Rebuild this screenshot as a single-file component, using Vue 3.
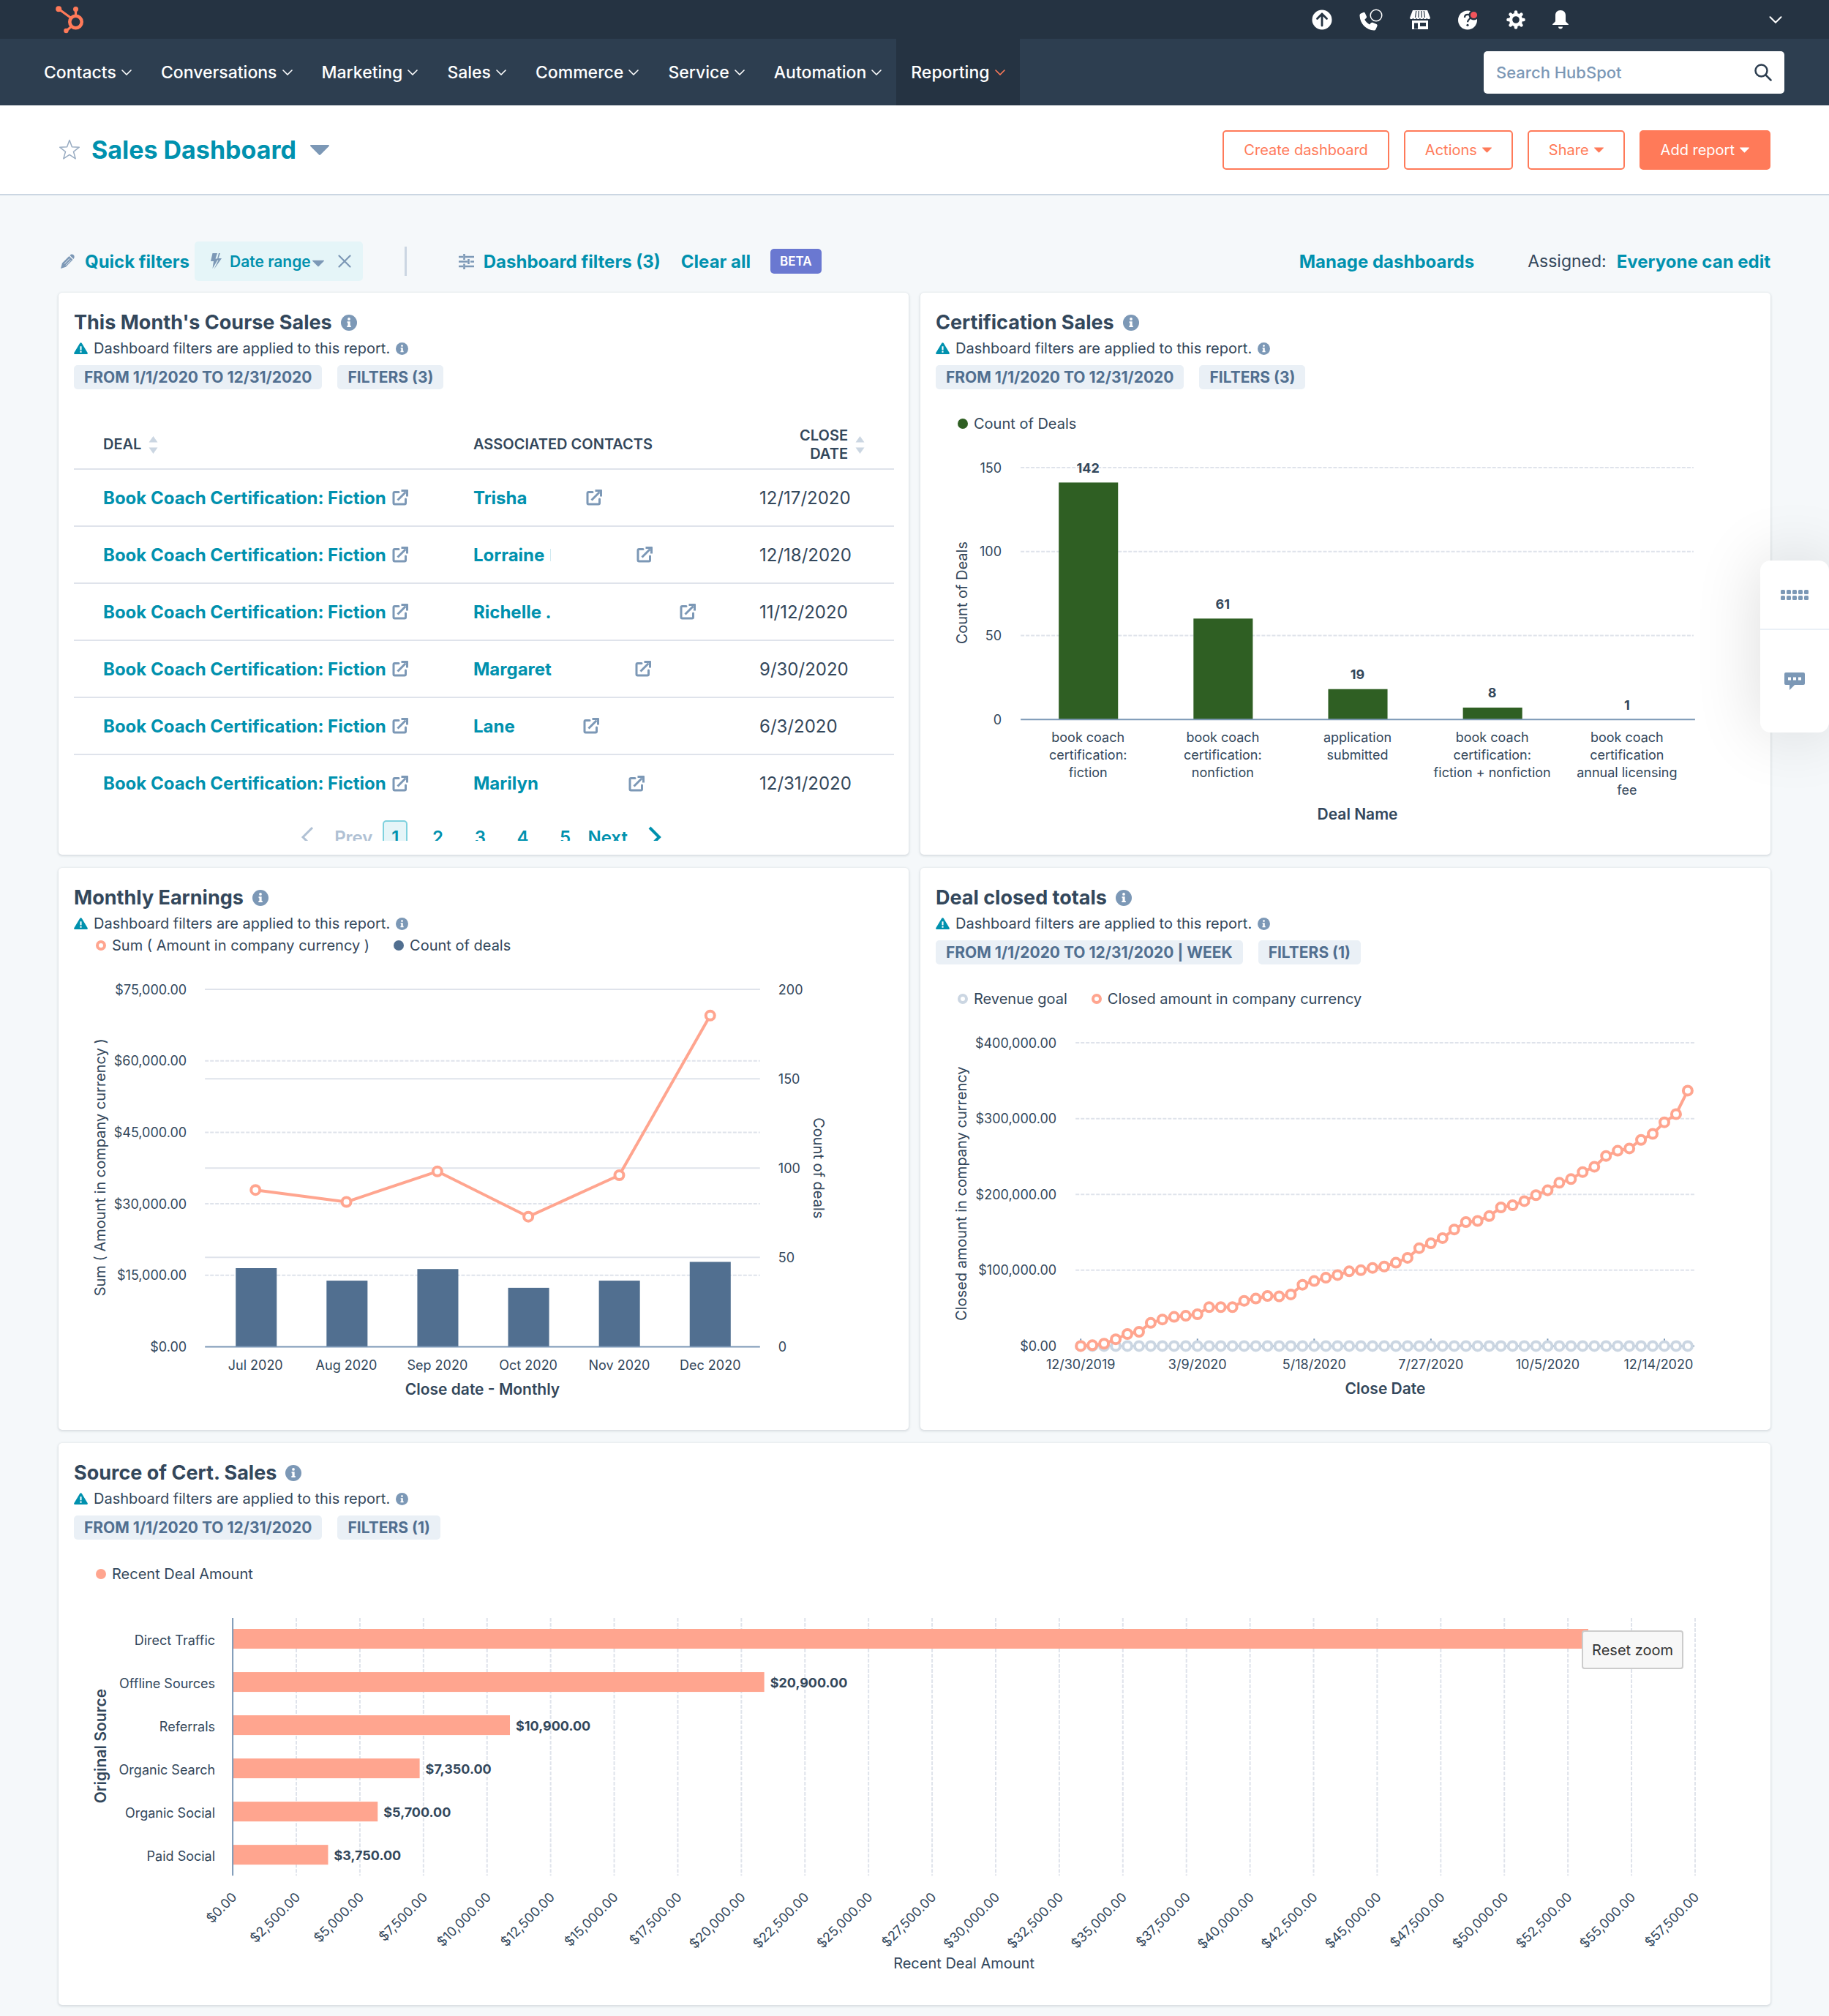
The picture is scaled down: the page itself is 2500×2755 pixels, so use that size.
<template>
  <div class="page">
    <!-- shared icon shapes -->
    <svg class="sprite" aria-hidden="true">
      <symbol id="i-info" viewBox="0 0 20 20">
        <circle cx="10" cy="10" r="10" fill="currentColor" />
        <circle cx="10" cy="5.4" r="1.7" fill="#fff" />
        <path d="M7.8 8.4h3.7v5.2h1v1.9H7.6v-1.9h1v-3.3h-.8z" fill="#fff" />
      </symbol>
      <symbol id="i-alert" viewBox="0 0 20 17">
        <path d="M8.6 1a1.6 1.6 0 0 1 2.8 0l8.3 13.8c.6 1-.1 2.2-1.3 2.2H1.6C.4 17-.3 15.8.3 14.8z" fill="currentColor" />
        <path d="M8.9 5.5h2.2v5.5H8.9zM8.9 12.3h2.2v2.2H8.9z" fill="#fff" />
      </symbol>
      <symbol id="i-external" viewBox="0 0 22 22">
        <path d="M9 3.5H3.5A1.5 1.5 0 0 0 2 5v13.500A1.5 1.5 0 0 0 3.5 20H17a1.5 1.5 0 0 0 1.500-1.500V13" fill="none" stroke="currentColor" stroke-width="3" stroke-linecap="round" />
        <path d="M7.500 14.500 18.500 3.500" fill="none" stroke="currentColor" stroke-width="3" />
        <path d="M12.500 0H21a1 1 0 0 1 1 1v8.500h-3V3h-6.500z" fill="currentColor" />
      </symbol>
      <symbol id="i-chevron" viewBox="0 0 14 8">
        <path d="M1 1l6 6 6-6" fill="none" stroke="currentColor" stroke-width="1.6" stroke-linecap="round" />
      </symbol>
      <symbol id="i-caret" viewBox="0 0 26 14">
        <path d="M1 0h24a1 1 0 0 1 .7 1.7L14 13.500a1.400 1.400 0 0 1-2 0L.3 1.700A1 1 0 0 1 1 0z" fill="currentColor" />
      </symbol>
      <symbol id="i-sort" viewBox="0 0 12 24">
        <path d="M6 0l6 8.500H0zM6 24l6-8.500H0z" fill="currentColor" />
      </symbol>
    </svg>

    <header>
      <div class="top-bar">
        <a href="#" class="logo" aria-label="Home">
          <svg width="38" height="38" viewBox="0 0 38 38" fill="none" stroke="#ff7a59">
            <circle cx="27.5" cy="22" r="8.2" stroke-width="4.6" />
            <path d="M27.5 14V6M21 16.500 4.500 4.500M21.800 28l-7 6" stroke-width="3.2" />
            <g fill="#ff7a59" stroke="none">
              <circle cx="4.2" cy="4.2" r="4" />
              <circle cx="27.5" cy="4.6" r="3.5" />
              <circle cx="14.4" cy="34" r="3.2" />
            </g>
          </svg>
        </a>
        <div class="top-icons">
          <button class="icon-btn" aria-label="Upgrade">
            <svg width="28" height="28" viewBox="0 0 28 28">
              <circle cx="14" cy="14" r="13.5" fill="#fff" />
              <path d="M14 22V6M7.500 12.500 14 6l6.500 6.500" fill="none" stroke="#253342" stroke-width="2.8" stroke-linecap="round" stroke-linejoin="round" />
            </svg>
          </button>
          <button class="icon-btn" aria-label="Calling">
            <svg width="32" height="30" viewBox="0 0 32 30">
              <path d="M2 6.500 5.500 5c1-.4 2 0 2.400 1l2 4.600c.3.800.1 1.600-.5 2.200L7.300 14.800c1.500 3 3.700 5 6.700 6.700l2-2.200c.6-.6 1.400-.8 2.200-.5l5.300 2.200c1 .4 1.400 1.400 1 2.400L22.500 28c-.5 1-1.400 1.600-2.500 1.500C9.500 29 1 20.500.5 9.500.4 8.200.9 7 2 6.500z" fill="#fff" />
              <circle cx="23" cy="9" r="7.8" fill="none" stroke="#fff" stroke-width="1.5" />
            </svg>
          </button>
          <button class="icon-btn" aria-label="Marketplace">
            <svg width="28" height="26" viewBox="0 0 28 26">
              <path d="M4 0h20l4 10.500c-.3 2-4 2-4.700.3-.8 1.700-4 1.700-4.700 0-.8 1.700-4 1.700-4.700 0-.8 1.700-4 1.700-4.700 0-.8 1.700-4 1.700-4.700 0C3.700 12.500.3 12.500 0 10.500z" fill="#fff" />
              <path d="M8.800 1 7.500 10M12.300 1l-.5 9M15.900 1l.4 9M19.300 1l1.200 9" stroke="#253342" stroke-width="1.2" />
              <path d="M3 14h22v12H3zM6 17.500v8h5v-8zM14 17v5h8v-5z" fill="#fff" fill-rule="evenodd" />
            </svg>
          </button>
          <button class="icon-btn" aria-label="Help">
            <svg width="30" height="28" viewBox="0 0 30 28">
              <circle cx="14" cy="14.5" r="13" fill="#fff" />
              <path d="M10 11c0-2.700 1.800-4.200 4.200-4.200 2.300 0 3.900 1.400 3.900 3.400 0 3-4 3.200-4 7" fill="none" stroke="#253342" stroke-width="2.3" />
              <circle cx="14" cy="21.3" r="1.6" fill="#253342" />
              <circle cx="22.5" cy="7.5" r="5.8" fill="#f2545b" stroke="#253342" stroke-width="2.4" />
            </svg>
          </button>
          <button class="icon-btn" aria-label="Settings">
            <svg width="26" height="26" viewBox="0 0 26 26" fill="none" stroke="#fff">
              <circle cx="13" cy="13" r="7" stroke-width="4.4" />
              <path d="M13 2.500v2M13 21.500v2M2.500 13h2M21.500 13h2M5.600 5.600 7 7M19 19l1.400 1.400M5.600 20.400 7 19M19 7l1.400-1.400" stroke-width="4.600" stroke-linecap="round" />
            </svg>
          </button>
          <button class="icon-btn" aria-label="Notifications">
            <svg width="22" height="26" viewBox="0 0 22 26">
              <path d="M11 0c4.500 0 7 3 7 7v7.500c0 2 4 3.500 4 5.500H0c0-2 4-3.500 4-5.500V7c0-4 2.500-7 7-7zM8 22.500h6c0 2-1.500 3-3 3s-3-1-3-3z" fill="#fff" />
            </svg>
          </button>
          <button class="icon-btn account" aria-label="Account menu">
            <svg width="18" height="10"><use href="#i-chevron" /></svg>
          </button>
        </div>
      </div>

      <nav class="main-nav">
        <a v-for="item in navItems" :key="item" href="#" class="nav-item" :class="{ active: item === 'Reporting' }">
          {{ item }}
          <svg width="14" height="8"><use href="#i-chevron" /></svg>
        </a>
        <div class="search">
          <input type="text" placeholder="Search HubSpot" aria-label="Search HubSpot" />
          <svg width="24" height="24" viewBox="0 0 24 24" fill="none" stroke="#2d3e50" stroke-width="2.5" stroke-linecap="round">
            <circle cx="9.5" cy="9.5" r="8" />
            <path d="M15.500 15.500 22.500 22.500" />
          </svg>
        </div>
      </nav>
    </header>

    <section class="title-bar">
      <svg width="30" height="29" viewBox="0 0 30 29" fill="none" stroke="#99acc2" stroke-width="1.5" stroke-linejoin="round">
        <path d="M15 1.500l3.400 9.300 9.900.4-7.800 6.100 2.700 9.600L15 21.400l-8.200 5.500 2.700-9.600-7.800-6.100 9.900-.4z" />
      </svg>
      <h1>Sales Dashboard</h1>
      <button class="icon-btn muted" aria-label="Switch dashboard">
        <svg width="26" height="14"><use href="#i-caret" /></svg>
      </button>
      <div class="title-actions">
        <button class="btn">Create dashboard</button>
        <button class="btn">Actions <svg width="13" height="8"><use href="#i-caret" /></svg></button>
        <button class="btn">Share <svg width="13" height="8"><use href="#i-caret" /></svg></button>
        <button class="btn btn-primary">Add report <svg width="13" height="8"><use href="#i-caret" /></svg></button>
      </div>
    </section>

    <main>
      <div class="filter-bar">
        <svg width="19" height="20" viewBox="0 0 19 20">
          <path d="M11.500 3 16.500 8 7 17.800 0 20l2-7.500z" fill="#7c98b6" />
          <path d="M12.500 2C14 .300 16.300.100 17.700 1.500c1.400 1.400 1.300 3.800-.3 5.500z" fill="#7c98b6" />
          <path d="M5 13.500l7-7M7 15.500l7-7" stroke="#f5f8fa" stroke-width="1" />
        </svg>
        <a href="#" class="link quick">Quick filters</a>
        <div class="chip">
          <svg width="16" height="24" viewBox="0 0 16 24" fill="#7c98b6">
            <path d="M2.500 1H9L6.500 8.500h4L2.500 22 4 12H0z" />
            <path d="M11 1h2l-2.500 7H15L4.500 23l6-12.500H8.500z" />
          </svg>
          <button class="link small">Date range<svg width="16" height="10"><use href="#i-caret" /></svg></button>
          <button class="icon-btn muted" aria-label="Remove date range">
            <svg width="18" height="18" viewBox="0 0 18 18" fill="none" stroke="currentColor" stroke-width="2.2" stroke-linecap="round"><path d="M1.500 1.500l15 15M16.500 1.500l-15 15" /></svg>
          </button>
        </div>
        <span class="divider"></span>
        <svg width="21" height="21" viewBox="0 0 21 21" fill="none" stroke="#7c98b6" stroke-width="2.6">
          <path d="M0 4h6M9 4h12M7.500 0v8M0 10.500h12M16 10.500h5M13.500 7v7M0 17h6M9 17h12M7.500 13.500V21" />
        </svg>
        <a href="#" class="link dashboard-filters">Dashboard filters (3)</a>
        <a href="#" class="link clear">Clear all</a>
        <span class="beta">BETA</span>
        <a href="#" class="link manage">Manage dashboards</a>
        <span class="assigned">Assigned:</span>
        <a href="#" class="link">Everyone can edit</a>
      </div>

      <div class="cards">
        <article v-for="card in cards" :key="card.id" class="card" :class="card.id">
          <h2>{{ card.title }} <svg class="muted" width="22" height="22"><use href="#i-info" /></svg></h2>
          <p class="notice">
            <svg class="teal" width="19" height="16"><use href="#i-alert" /></svg>
            <span>Dashboard filters are applied to this report.</span>
            <svg class="muted" width="17" height="17"><use href="#i-info" /></svg>
          </p>
          <div v-if="card.badges" class="badges">
            <span v-for="badge in card.badges" :key="badge" class="badge">{{ badge }}</span>
          </div>
          <div v-if="card.legend" class="legend">
            <span v-for="entry in card.legend" :key="entry.label" class="legend-item">
              <i :class="[entry.shape, entry.tone]"></i>{{ entry.label }}
            </span>
          </div>

          <div v-if="card.id === 'deals'" class="report">
            <table>
              <thead>
                <tr>
                  <th class="col-deal"><span class="th">DEAL <svg width="13" height="24"><use href="#i-sort" /></svg></span></th>
                  <th>ASSOCIATED CONTACTS</th>
                  <th class="col-date"><span class="th">CLOSE<br />DATE <svg width="13" height="24"><use href="#i-sort" /></svg></span></th>
                </tr>
              </thead>
              <tbody>
                <tr v-for="row in deals" :key="row.name">
                  <td>
                    <span class="cell">
                      <a href="#" class="link">Book Coach Certification: Fiction</a>
                      <svg class="muted" width="22" height="22"><use href="#i-external" /></svg>
                    </span>
                  </td>
                  <td>
                    <span class="cell">
                      <a href="#" class="link contact" :style="{ width: row.width + 'px' }">{{ row.name }}<i v-if="row.tail" class="tail"></i></a>
                      <svg class="muted" width="22" height="22"><use href="#i-external" /></svg>
                    </span>
                  </td>
                  <td>{{ row.date }}</td>
                </tr>
              </tbody>
            </table>
            <div class="pager">
              <button class="prev" disabled>
                <svg width="18" height="30" viewBox="0 0 18 30" fill="none" stroke="currentColor" stroke-width="3"><path d="M16 2 3 15l13 13" /></svg>
                Prev
              </button>
              <button v-for="n in 5" :key="n" class="page-no" :class="{ current: n === 1 }">{{ n }}</button>
              <button class="next">
                Next
                <svg width="18" height="30" viewBox="0 0 18 30" fill="none" stroke="currentColor" stroke-width="4"><path d="M2 2l13 13L2 28" /></svg>
              </button>
            </div>
          </div>

          <svg v-if="card.id === 'certs'" class="chart" viewBox="0 0 1161 540">
            <g class="grid">
              <path v-for="t in [50, 100, 150]" :key="t" :d="`M137 ${certY(t)}H1056`" />
            </g>
            <g class="tick end">
              <text v-for="t in [0, 50, 100, 150]" :key="t" x="111" :y="certY(t)">{{ t }}</text>
            </g>
            <template v-for="(c, i) in certs" :key="i">
              <rect v-if="c.value > 1" class="green" :x="189 + i * 184" :y="certY(c.value) + 2" width="81" :height="388 - certY(c.value)" />
              <text class="value mid" :x="229 + i * 184" :y="certY(c.value) - 18">{{ c.value }}</text>
              <text v-for="(line, n) in c.lines" :key="n" class="tick mid" :x="229 + i * 184" :y="414 + n * 24">{{ line }}</text>
            </template>
            <path class="axis" d="M137 390H1058" />
            <text class="axis-title mid bold" x="597" y="519">Deal Name</text>
            <text class="axis-title mid" transform="translate(57 217) rotate(-90)">Count of Deals</text>
          </svg>

          <svg v-if="card.id === 'monthly'" class="chart" viewBox="0 0 1161 620">
            <g class="grid solid">
              <path v-for="t in [50, 100, 150, 200]" :key="t" :d="`M200 ${countY(t)}H958`" />
            </g>
            <g class="grid">
              <path v-for="t in [15, 30, 45, 60, 75]" :key="t" :d="`M200 ${sumY(t)}H958`" />
            </g>
            <g class="tick end">
              <text v-for="t in [0, 15, 30, 45, 60, 75]" :key="t" x="175" :y="sumY(t)">{{ money(t * 1000) }}</text>
            </g>
            <g class="tick">
              <text v-for="t in [0, 50, 100, 150, 200]" :key="t" x="983" :y="countY(t)">{{ t }}</text>
            </g>
            <rect v-for="(m, i) in months" :key="m.label" class="slate" :x="242 + i * 124" :y="countY(m.count)" width="56" :height="534 - countY(m.count)" />
            <path class="axis" d="M200 534H958" />
            <polyline class="line" :points="points(months.map((m, i) => [monthX(i), sumY(m.sum)]))" />
            <template v-for="(m, i) in months" :key="m.label">
              <circle class="marker" :cx="monthX(i)" :cy="sumY(m.sum)" r="6" />
              <text class="tick mid" :x="monthX(i)" y="559">{{ m.label }}</text>
            </template>
            <text class="axis-title mid bold" x="579" y="592">Close date - Monthly</text>
            <text class="axis-title mid" transform="translate(57 289) rotate(-90)">Sum ( Amount in company currency )</text>
            <text class="axis-title mid" transform="translate(1038 290) rotate(90)">Count of deals</text>
          </svg>

          <svg v-if="card.id === 'closed'" class="chart" viewBox="0 0 1161 550">
            <g class="grid">
              <path v-for="t in [100, 200, 300, 400]" :key="t" :d="`M212 ${closedY(t)}H1057`" />
            </g>
            <g class="tick end">
              <text v-for="t in [0, 100, 200, 300, 400]" :key="t" x="186" :y="closedY(t)">{{ money(t * 1000) }}</text>
            </g>
            <path class="axis" d="M212 460H1057" />
            <g v-for="(label, i) in weekLabels" :key="label">
              <path class="axis" :d="`M${weekX(i * 10)} 450v10`" />
              <text class="tick mid" :x="Math.min(weekX(i * 10), 1008)" y="485">{{ label }}</text>
            </g>
            <circle v-for="(v, i) in closed" :key="'goal' + i" class="marker goal" :cx="weekX(i)" cy="460" r="6" />
            <polyline class="line" :points="points(closed.map((v, i) => [weekX(i), closedY(v)]))" />
            <circle v-for="(v, i) in closed" :key="i" class="marker" :cx="weekX(i)" :cy="closedY(v)" r="6" />
            <text class="axis-title mid bold" x="635" y="518">Close Date</text>
            <text class="axis-title mid" transform="translate(56 252) rotate(-90)">Closed amount in company currency</text>
          </svg>

          <div v-if="card.id === 'source'" class="chart-wrap">
            <svg class="chart" viewBox="0 0 2339 550">
              <g class="grid">
                <path v-for="n in 23" :key="n" :d="`M${sourceX(n * 2500)} 46V398`" />
              </g>
              <text v-for="n in 24" :key="n" class="tick end" :transform="`translate(${sourceX((n - 1) * 2500) + 2} 424) rotate(-45)`">{{ money((n - 1) * 2500) }}</text>
              <template v-for="(s, i) in sources" :key="s.label">
                <text class="tick end" x="214" :y="76 + i * 59">{{ s.label }}</text>
                <rect class="salmon" x="238" :y="61 + i * 59" :width="sourceX(s.value) - 238" height="27" />
                <text v-if="i" class="value" :x="sourceX(s.value) + 8" :y="75 + i * 59">{{ money(s.value) }}</text>
              </template>
              <path class="axis" d="M238 46V398" />
              <text class="axis-title mid" x="1237" y="518">Recent Deal Amount</text>
              <text class="axis-title mid bold" transform="translate(57 221) rotate(-90)">Original Source</text>
            </svg>
            <button class="reset">Reset zoom</button>
          </div>
        </article>
      </div>
    </main>

    <aside class="side-widget">
      <button class="icon-btn muted" aria-label="Open panel">
        <svg width="38" height="14" viewBox="0 0 38 14" fill="currentColor">
          <template v-for="n in 5" :key="n">
            <rect :x="(n - 1) * 8" y="0" width="6" height="6" rx="1.5" />
            <rect :x="(n - 1) * 8" y="8" width="6" height="6" rx="1.5" />
          </template>
        </svg>
      </button>
      <button class="icon-btn muted chat" aria-label="Chat">
        <svg width="28" height="24" viewBox="0 0 28 24">
          <path d="M2 0h24a2 2 0 0 1 2 2v13a2 2 0 0 1-2 2H14l-7 7v-7H2a2 2 0 0 1-2-2V2a2 2 0 0 1 2-2z" fill="currentColor" />
          <path d="M5 6.500h4v4H5zM12 6.500h4v4h-4zM19 6.500h4v4h-4z" fill="#fff" />
        </svg>
      </button>
    </aside>
  </div>
</template>

<script setup>
const navItems = ['Contacts', 'Conversations', 'Marketing', 'Sales', 'Commerce', 'Service', 'Automation', 'Reporting'];

const range = 'FROM 1/1/2020 TO 12/31/2020';

const cards = [
  { id: 'deals', title: "This Month's Course Sales", badges: [range, 'FILTERS (3)'] },
  {
    id: 'certs',
    title: 'Certification Sales',
    badges: [range, 'FILTERS (3)'],
    legend: [{ label: 'Count of Deals', shape: 'dot', tone: 'tone-green' }],
  },
  {
    id: 'monthly',
    title: 'Monthly Earnings',
    legend: [
      { label: 'Sum ( Amount in company currency )', shape: 'ring', tone: 'tone-salmon' },
      { label: 'Count of deals', shape: 'dot', tone: 'tone-slate' },
    ],
  },
  {
    id: 'closed',
    title: 'Deal closed totals',
    badges: [range + ' | WEEK', 'FILTERS (1)'],
    legend: [
      { label: 'Revenue goal', shape: 'ring', tone: 'tone-grey' },
      { label: 'Closed amount in company currency', shape: 'ring', tone: 'tone-salmon' },
    ],
  },
  {
    id: 'source',
    title: 'Source of Cert. Sales',
    badges: [range, 'FILTERS (1)'],
    legend: [{ label: 'Recent Deal Amount', shape: 'dot', tone: 'tone-salmon' }],
  },
];

// width is the room taken by the full contact name
const deals = [
  { name: 'Trisha', width: 146, date: '12/17/2020' },
  { name: 'Lorraine', width: 215, date: '12/18/2020', tail: true },
  { name: 'Richelle .', width: 274, date: '11/12/2020' },
  { name: 'Margaret', width: 213, date: '9/30/2020' },
  { name: 'Lane', width: 142, date: '6/3/2020' },
  { name: 'Marilyn', width: 204, date: '12/31/2020' },
];

const certs = [
  { value: 142, lines: ['book coach', 'certification:', 'fiction'] },
  { value: 61, lines: ['book coach', 'certification:', 'nonfiction'] },
  { value: 19, lines: ['application', 'submitted'] },
  { value: 8, lines: ['book coach', 'certification:', 'fiction + nonfiction'] },
  { value: 1, lines: ['book coach', 'certification', 'annual licensing', 'fee'] },
];

// sums in thousands
const months = [
  { label: 'Jul 2020', count: 44, sum: 32.9 },
  { label: 'Aug 2020', count: 37, sum: 30.4 },
  { label: 'Sep 2020', count: 43.5, sum: 36.8 },
  { label: 'Oct 2020', count: 33, sum: 27.3 },
  { label: 'Nov 2020', count: 37, sum: 36 },
  { label: 'Dec 2020', count: 47.5, sum: 69.5 },
];

const weekLabels = ['12/30/2019', '3/9/2020', '5/18/2020', '7/27/2020', '10/5/2020', '12/14/2020'];

// running total per week, in thousands
const closed = [
  0, 1, 3, 8.9, 15.8, 18.7, 30.5, 35, 38.4, 39.9, 41.9, 51.2, 51.2, 51.2, 59.6, 62.6, 66, 65.5,
  68, 80.8, 85.7, 90.1, 93.6, 98.5, 100, 103, 104.9, 109.9, 116.3, 129.1, 135.5, 142.4, 153.7,
  163.5, 165, 171.4, 182.8, 185.7, 191.1, 199, 205.4, 215.3, 220.2, 229.5, 236.5, 250.7, 257.6,
  260.6, 271.9, 279.8, 295.1, 305.9, 336.9,
];

const sources = [
  { label: 'Direct Traffic', value: 53300 },
  { label: 'Offline Sources', value: 20900 },
  { label: 'Referrals', value: 10900 },
  { label: 'Organic Search', value: 7350 },
  { label: 'Organic Social', value: 5700 },
  { label: 'Paid Social', value: 3750 },
];

const certY = (v) => 390 - (v * 344) / 150;
const sumY = (v) => 534 - (v * 488) / 75;
const countY = (v) => 534 - (v * 488) / 200;
const monthX = (i) => 269 + (i * 621) / 5;
const closedY = (v) => 460 - (v * 414) / 400;
const weekX = (i) => 219 + (i * 829) / 52;
const sourceX = (v) => 238 + (v * 1998) / 57500;

const points = (list) => list.map((p) => p.join(',')).join(' ');
const money = (v) => '$' + v.toLocaleString('en-US', { minimumFractionDigits: 2 });
</script>

<style>
body {
  margin: 0;
  background: #f5f8fa;
}
</style>

<style scoped>
.page {
  font-family: Inter, "Noto Sans", sans-serif;
  font-size: 24px;
  color: #33475b;
  background: #f5f8fa;
}

.sprite {
  display: none;
}

svg {
  flex: none;
}

a {
  text-decoration: none;
}

button {
  font: inherit;
  color: inherit;
  background: none;
  border: none;
  padding: 0;
  cursor: pointer;
}

.icon-btn {
  display: flex;
  align-items: center;
  justify-content: center;
}

.muted {
  color: #7c98b6;
}

.teal {
  color: #0091ae;
}

.link {
  color: #0091ae;
  font-weight: 700;
}

/* header */
.top-bar {
  display: flex;
  align-items: center;
  justify-content: space-between;
  height: 53px;
  padding: 0 64px 0 76px;
  background: #253342;
  color: #fff;
}

.logo,
.logo svg {
  display: block;
}

.top-icons {
  display: flex;
  align-items: center;
  gap: 37px;
}

.account {
  margin-left: 237px;
}

.main-nav {
  display: flex;
  align-items: center;
  height: 91px;
  padding: 0 61px 0 40px;
  background: #2d3e50;
}

.nav-item {
  display: flex;
  align-items: center;
  gap: 7px;
  height: 100%;
  padding: 0 20px;
  color: #fff;
  font-size: 23px;
  font-weight: 500;
}

.nav-item.active {
  background: #253342;
}

.nav-item.active svg {
  color: #ff7a59;
}

.search {
  display: flex;
  align-items: center;
  width: 411px;
  height: 58px;
  margin-left: auto;
  padding: 0 17px;
  box-sizing: border-box;
  background: #fff;
  border-radius: 5px;
}

.search input {
  flex: 1;
  min-width: 0;
  border: none;
  outline: none;
  padding: 0;
  font: inherit;
  font-size: 22px;
  font-weight: 500;
}

.search input::placeholder {
  color: #7c98b6;
}

.title-bar {
  display: flex;
  align-items: center;
  gap: 15px;
  height: 121px;
  padding: 0 80px;
  background: #fff;
  border-bottom: 2px solid #cbd6e2;
}

h1 {
  margin: 0 4px 0 0;
  font-size: 34px;
  font-weight: 700;
  color: #0091ae;
}

.title-actions {
  display: flex;
  gap: 20px;
  margin-left: auto;
}

.btn {
  display: flex;
  align-items: center;
  gap: 7px;
  height: 54px;
  padding: 0 27px;
  border: 2px solid #ff7a59;
  border-radius: 5px;
  font-size: 20px;
  color: #ff7a59;
}

.btn-primary {
  background: #ff7a59;
  color: #fff;
}

/* filters */
main {
  padding: 63px 80px 15px;
}

.filter-bar {
  display: flex;
  align-items: center;
  height: 54px;
  margin-bottom: 16px;
  padding-left: 3px;
}

.quick {
  margin: 0 7px 0 14px;
}

.chip {
  display: flex;
  align-items: center;
  gap: 10px;
  height: 54px;
  padding: 0 16px 0 22px;
  background: #e5f5f8;
  border-radius: 5px;
}

.chip .icon-btn {
  margin-left: 9px;
}

.small {
  font-size: 21px;
  font-weight: 600;
}

.small svg {
  margin-left: 2px;
  color: #7c98b6;
}

.divider {
  width: 3px;
  height: 40px;
  margin: 0 71px 0 57px;
  background: #cbd6e2;
}

.dashboard-filters {
  margin: 0 28px 0 13px;
}

.clear {
  margin-right: 27px;
}

.beta {
  padding: 0 13px;
  border-radius: 5px;
  background: #6a78d1;
  color: #fff;
  font-size: 17px;
  font-weight: 600;
  line-height: 34px;
}

.manage {
  margin-left: auto;
}

.assigned {
  margin: 0 14px 0 73px;
  font-size: 23px;
}

/* cards */
.cards {
  display: grid;
  grid-template-columns: 1fr 1fr;
  gap: 18px 16px;
}

.card {
  min-height: 768px;
  padding-top: 25px;
  box-sizing: border-box;
  background: #fff;
  border-radius: 5px;
  box-shadow: 0 1px 3px 1px rgba(45, 62, 80, 0.14);
}

.source {
  grid-column: 1 / -1;
}

h2 {
  display: flex;
  align-items: center;
  gap: 12px;
  margin: 0 21px;
  font-size: 27px;
  font-weight: 700;
  line-height: 32px;
}

.notice {
  display: flex;
  align-items: center;
  gap: 8px;
  margin: 5px 21px 0;
  font-size: 20px;
  line-height: 28px;
}

.badges {
  display: flex;
  gap: 21px;
  margin: 9px 21px 0;
}

.badge {
  padding: 0 14px;
  border-radius: 5px;
  background: #eaf0f6;
  color: #516f90;
  font-size: 21px;
  font-weight: 700;
  line-height: 33px;
}

.legend {
  display: flex;
  gap: 33px;
  margin: 33px 51px 0;
  font-size: 20px;
  line-height: 28px;
}

.monthly .legend {
  margin-top: 2px;
}

.legend-item {
  display: flex;
  align-items: center;
  gap: 8px;
}

.dot,
.ring {
  width: 14px;
  height: 14px;
  box-sizing: border-box;
  border-radius: 50%;
}

.dot {
  background: currentColor;
}

.ring {
  border: 4px solid currentColor;
}

.tone-green { color: #2f5f23; }
.tone-salmon { color: #ffa58f; }
.tone-slate { color: #516f90; }
.tone-grey { color: #cbd6e2; }

/* deals table */
.report {
  height: 586px;
  margin: 31px 20px 0 21px;
  overflow: hidden;
}

table {
  width: 100%;
  border-collapse: collapse;
  table-layout: fixed;
}

th {
  height: 78px;
  padding: 12px 0 0;
  box-sizing: border-box;
  font-size: 20px;
  font-weight: 600;
  line-height: 25px;
  text-align: left;
  border-bottom: 2px solid #dfe3eb;
}

.col-deal {
  width: 546px;
  padding-left: 40px;
}

.col-date {
  width: 184px;
  padding-right: 40px;
  text-align: right;
}

.th {
  display: inline-flex;
  align-items: center;
  gap: 10px;
}

.th svg {
  color: #cbd6e2;
}

td {
  height: 78px;
  padding: 0;
  box-sizing: border-box;
  border-bottom: 2px solid #dfe3eb;
}

td:first-child {
  padding-left: 40px;
}

tr:last-child td {
  border-bottom: none;
}

.cell {
  display: flex;
  align-items: center;
  gap: 8px;
}

.tail {
  display: inline-block;
  width: 1px;
  height: 17px;
  margin-left: 8px;
  background: #cfe9f0;
}

.pager {
  display: flex;
  justify-content: center;
  align-items: center;
  gap: 24px;
  padding: 12px 0 0;
  margin-right: 8px;
  color: #0091ae;
  font-weight: 600;
}

.page-no {
  width: 34px;
  height: 46px;
  box-sizing: border-box;
}

.current {
  background: #e5f5f8;
  border: 2px solid #7fd1de;
  border-radius: 5px;
}

.prev,
.next {
  display: flex;
  align-items: center;
  gap: 28px;
}

.prev {
  color: #b0c1d4;
  margin-right: -10px;
}

.next {
  margin-left: -10px;
}

/* charts */
.chart {
  display: block;
  width: 100%;
  height: auto;
}

.chart text {
  fill: #33475b;
  dominant-baseline: central;
}

.tick {
  font-size: 18px;
}

.value {
  font-size: 18px;
  font-weight: 700;
}

.axis-title {
  font-size: 20px;
}

.bold {
  font-size: 21px;
  font-weight: 600;
}

.mid {
  text-anchor: middle;
}

.end {
  text-anchor: end;
}

.grid path {
  stroke: #dfe3eb;
  stroke-width: 2;
  stroke-dasharray: 5 2;
}

.grid.solid path {
  stroke-dasharray: none;
}

.axis {
  fill: none;
  stroke: #7c98b6;
  stroke-width: 2;
}

.green { fill: #2f5f23; }
.slate { fill: #516f90; }
.salmon { fill: #ffa58f; }

.line {
  fill: none;
  stroke: #ffa58f;
  stroke-width: 4;
  stroke-linejoin: round;
}

.marker {
  fill: #fff;
  stroke: #ffa58f;
  stroke-width: 4;
}

.goal {
  stroke: #cbd6e2;
}

.chart-wrap {
  position: relative;
}

.reset {
  position: absolute;
  top: 63px;
  right: 119px;
  height: 53px;
  padding: 0 12px;
  border: 2px solid #ccc;
  border-radius: 4px;
  background: #f7f7f7;
  color: #333;
  font-size: 20px;
}

/* floating panel */
.side-widget {
  position: absolute;
  top: 766px;
  right: 0;
  width: 94px;
  background: #fff;
  border-radius: 14px;
  box-shadow: 0 0 90px rgba(0, 0, 0, 0.14);
}

.side-widget .icon-btn {
  width: 100%;
  height: 93px;
}

.side-widget .chat {
  height: 142px;
  border-top: 2px solid #eaf0f6;
}
</style>
